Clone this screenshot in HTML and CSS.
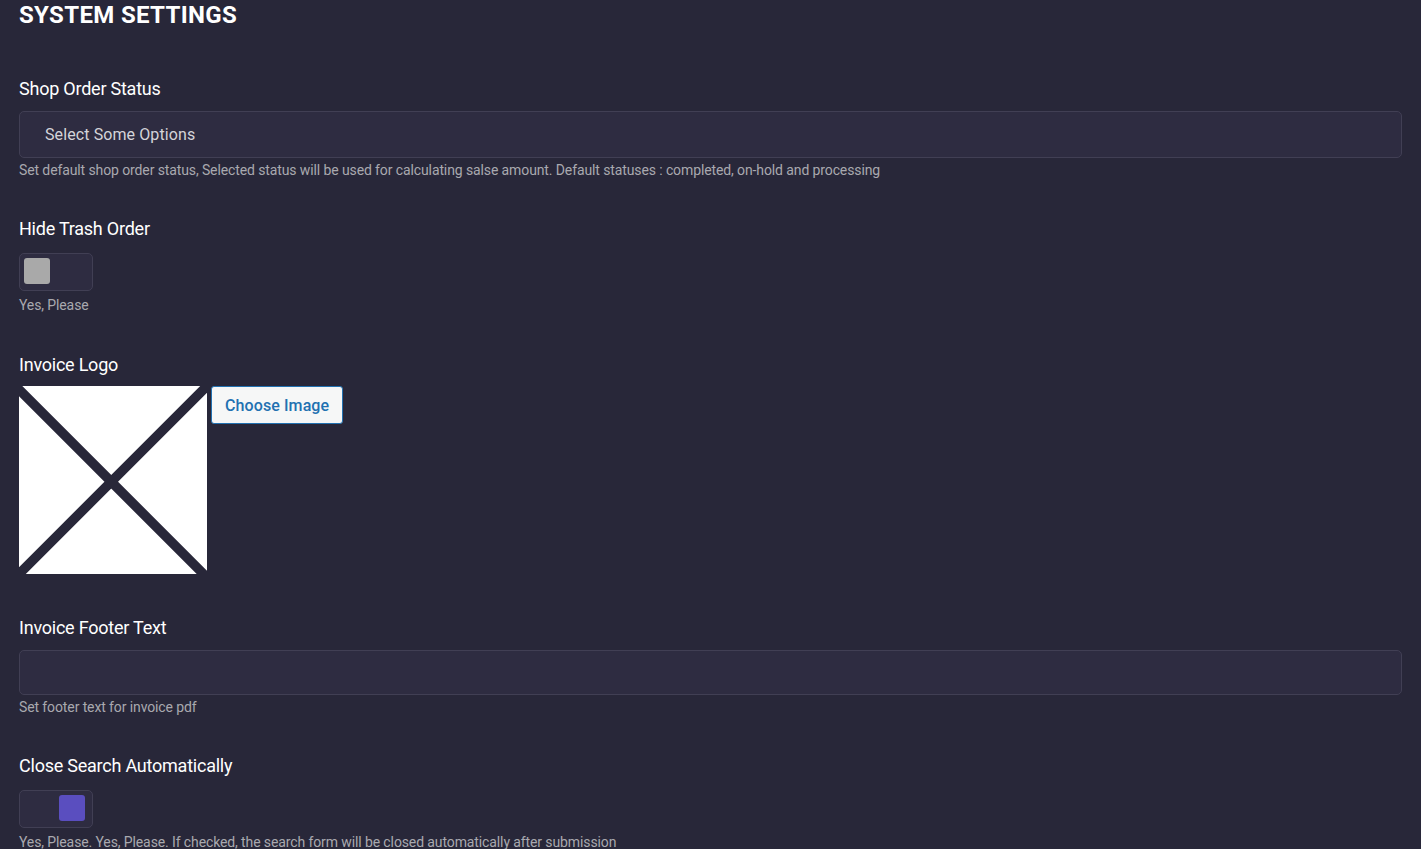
FILE: index.html
```html
<!DOCTYPE html>
<html lang="en">
<head>
<meta charset="utf-8">
<title>System Settings</title>
<link rel="stylesheet" href="styles.css">
</head>
<body>
<main class="page">
  <h1 class="title">SYSTEM SETTINGS</h1>

  <section class="field field-first">
    <label class="label">Shop Order Status</label>
    <div class="select">Select Some Options</div>
    <p class="help">Set default shop order status, Selected status will be used for calculating salse amount. Default statuses : completed, on-hold and processing</p>
  </section>

  <section class="field">
    <label class="label label-toggle">Hide Trash Order</label>
    <div class="toggle"><span class="knob"></span></div>
    <p class="help help-toggle">Yes, Please</p>
  </section>

  <section class="field field-logo">
    <label class="label label-logo">Invoice Logo</label>
    <div class="logo-row">
      <svg class="logo" width="188" height="188" viewBox="0 0 188 188" aria-hidden="true">
        <rect width="188" height="188" fill="#fff"/>
        <path d="M-10 -6.5 L198 201.5 M198 -10 L-10 198" stroke="#282739" stroke-width="9.6" fill="none"/>
      </svg>
      <button class="choose" type="button">Choose Image</button>
    </div>
  </section>

  <section class="field field-footer">
    <label class="label">Invoice Footer Text</label>
    <input class="text-input" type="text">
    <p class="help">Set footer text for invoice pdf</p>
  </section>

  <section class="field">
    <label class="label label-toggle">Close Search Automatically</label>
    <div class="toggle toggle-on"><span class="knob"></span></div>
    <p class="help help-toggle">Yes, Please. Yes, Please. If checked, the search form will be closed automatically after submission</p>
  </section>
</main>
</body>
</html>
```
FILE: styles.css
```css
* { box-sizing: border-box; }
html, body { margin: 0; height: 100%; overflow: hidden; }
body {
  background: #282739;
  font-family: Roboto, "Liberation Sans", sans-serif;
  color: #fff;
}
.page { padding: 0 19px; }
.title {
  margin: 0;
  padding-top: 1px;
  font-size: 24px;
  line-height: 28px;
  font-weight: 700;
  letter-spacing: 0.33px;
  color: #fff;
}
.field { margin-top: 38px; }
.field-first { margin-top: 48px; }
.field-logo { margin-top: 39px; }
.field-footer { margin-top: 42px; }
.label {
  display: block;
  font-size: 18px;
  line-height: 24px;
  font-weight: 400;
  letter-spacing: -0.23px;
  color: #fff;
  margin-bottom: 10px;
}
.label-toggle { margin-bottom: 12px; }
.label-logo { margin-bottom: 9px; }
.select {
  height: 47px;
  padding: 0 25px;
  display: flex;
  align-items: center;
  background: #2e2c41;
  border: 1px solid #413f54;
  border-radius: 5px;
  font-size: 16px;
  letter-spacing: 0.1px;
  color: #d4d4d9;
}
.help {
  margin: 3px 0 0;
  font-size: 14px;
  line-height: 18px;
  letter-spacing: -0.11px;
  color: #a9a9af;
}
.help-toggle { margin: 5px 0 0; }
.toggle {
  width: 74px;
  height: 38px;
  padding: 4px;
  display: flex;
  background: #2e2c41;
  border: 1px solid #413f54;
  border-radius: 5px;
}
.toggle-on { justify-content: flex-end; }
.knob {
  width: 26px;
  height: 26px;
  border-radius: 3px;
  background: #a9a9a9;
}
.toggle-on .knob { background: #5a4ebf; margin-right: 3px; }
.logo-row { display: flex; align-items: flex-start; gap: 4px; }
.logo { display: block; flex: none; }
.choose {
  height: 38px;
  padding: 0 13px;
  background: #f6f7f7;
  border: 1px solid #2271b1;
  border-radius: 3px;
  color: #2271b1;
  font-family: inherit;
  font-size: 16px;
  font-weight: 500;
  letter-spacing: 0.1px;
}
.text-input {
  display: block;
  width: 100%;
  height: 45px;
  background: #2e2c41;
  border: 1px solid #413f54;
  border-radius: 5px;
}
```
